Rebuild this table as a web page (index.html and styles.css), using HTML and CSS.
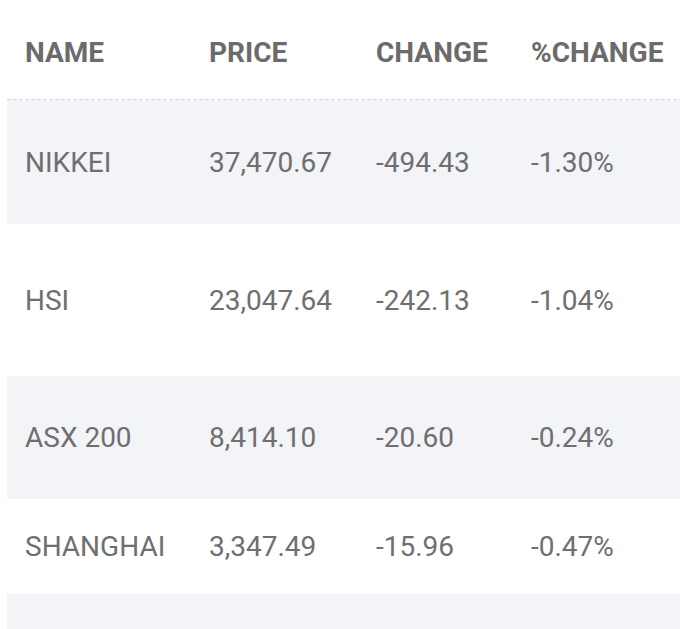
FILE: index.html
```html
<!DOCTYPE html>
<html>
<head>
<meta charset="utf-8">
<link rel="stylesheet" href="styles.css">
</head>
<body>
<div class="table">
  <div class="row head">
    <div class="cell">NAME</div>
    <div class="cell">PRICE</div>
    <div class="cell">CHANGE</div>
    <div class="cell">%CHANGE</div>
  </div>
  <div class="row alt h1">
    <div class="cell">NIKKEI</div>
    <div class="cell">37,470.67</div>
    <div class="cell">-494.43</div>
    <div class="cell">-1.30%</div>
  </div>
  <div class="row h2">
    <div class="cell">HSI</div>
    <div class="cell">23,047.64</div>
    <div class="cell">-242.13</div>
    <div class="cell">-1.04%</div>
  </div>
  <div class="row alt h3">
    <div class="cell">ASX 200</div>
    <div class="cell">8,414.10</div>
    <div class="cell">-20.60</div>
    <div class="cell">-0.24%</div>
  </div>
  <div class="row h4">
    <div class="cell">SHANGHAI</div>
    <div class="cell">3,347.49</div>
    <div class="cell">-15.96</div>
    <div class="cell">-0.47%</div>
  </div>
  <div class="row alt h5"></div>
</div>
</body>
</html>
```

FILE: styles.css
```css
html, body {
  margin: 0;
  padding: 0;
  background: #ffffff;
}
body {
  font-family: Roboto, "Liberation Sans", sans-serif;
  overflow: hidden;
  height: 629px;
}
.table {
  margin-left: 7px;
}
.row {
  display: grid;
  grid-template-columns: 184px 167px 155px 1fr;
  align-items: center;
  font-size: 28px;
  color: #6f6f6f;
  white-space: nowrap;
}
.cell {
  padding-left: 18px;
}
.head {
  height: 92px;
  padding-top: 6px;
  padding-bottom: 2px;
  background: repeating-linear-gradient(to right, #d4d4d4 0 4px, transparent 4px 6px) left bottom / 100% 1px no-repeat;
  font-weight: 700;
  color: #6b6b6b;
}
.alt {
  background: #f2f4f7;
}
.h1 { height: 124px; }
.h2 { height: 152px; }
.h3 { height: 123px; }
.h4 { height: 95px; }
.h5 { height: 60px; }
```
